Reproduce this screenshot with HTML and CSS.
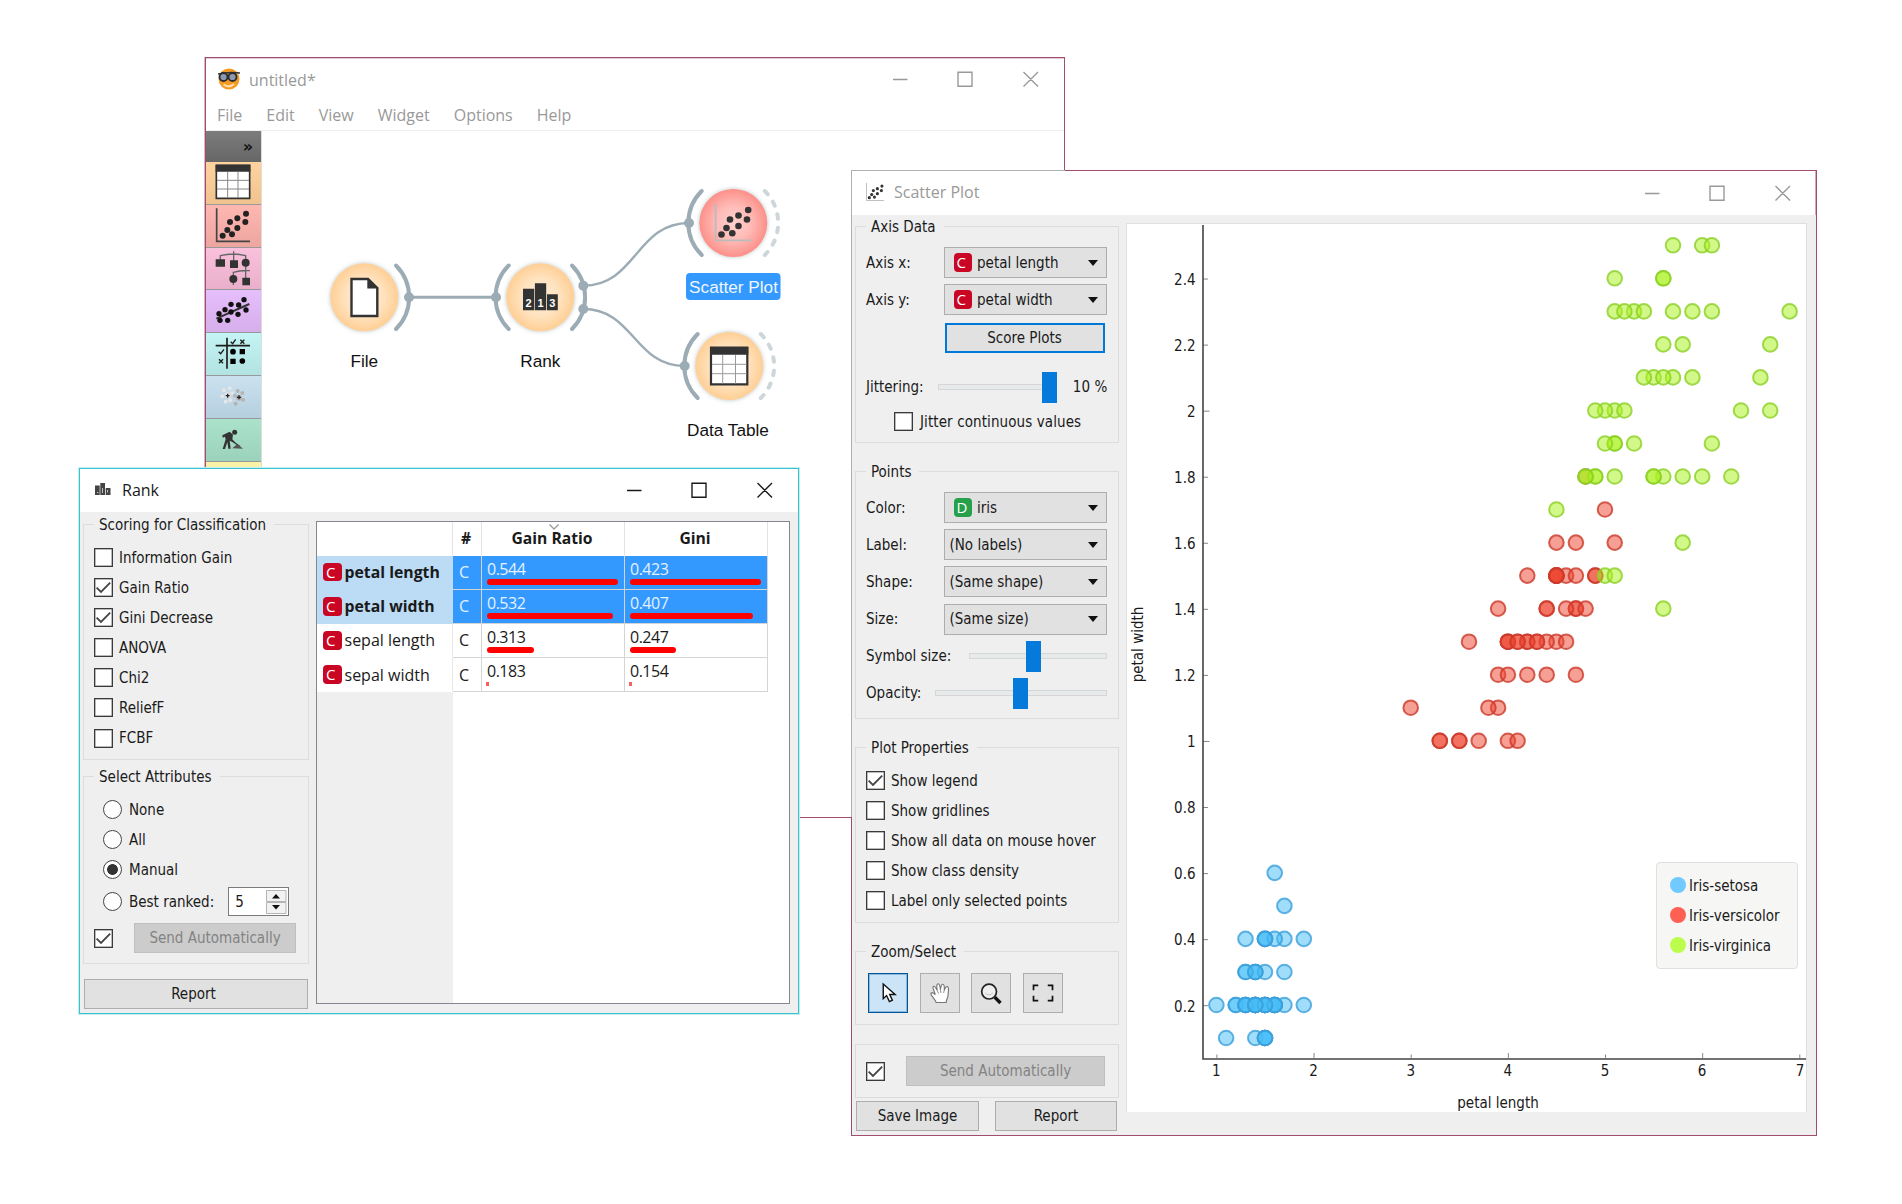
FILE: index.html
```html
<!DOCTYPE html>
<html lang="en">
<head>
<meta charset="utf-8">
<title>Orange workflow: Rank and Scatter Plot</title>
<link rel="stylesheet" href="styles.css">
</head>
<body>
<svg class="defs" aria-hidden="true">
  <defs>
    <symbol id="controls" viewBox="0 0 146 16"><path d="M0 8.5H14.5M65 1.2H79V15.2H65ZM130.5 1L145 15.5M145 1L130.5 15.5" fill="none" stroke="currentColor" stroke-width="1.4"/></symbol>
    <symbol id="tick" viewBox="0 0 19 19"><path d="M2.6 9.6L7 14L16.2 4.6" fill="none" stroke="#444" stroke-width="1.8"/></symbol>
    <symbol id="scatter" viewBox="0 0 38 38"><path d="M1 0V37H38" fill="none" stroke="var(--axis)" stroke-width="2"/><g fill="#333"><circle cx="7" cy="31" r="3.3"/><circle cx="12" cy="24.500" r="3.300"/><circle cx="17.800" cy="29.800" r="3.300"/><circle cx="15.500" cy="16" r="3.300"/><circle cx="24" cy="12" r="3.300"/><circle cx="24" cy="22.500" r="3.300"/><circle cx="33.700" cy="6.500" r="3.300"/><circle cx="32.500" cy="16" r="3.300"/></g></symbol>
    <radialGradient id="orange"><stop offset="0" stop-color="#ffedd5"/><stop offset=".55" stop-color="#ffe3c0"/><stop offset="1" stop-color="#ffcf95"/></radialGradient>
    <radialGradient id="red"><stop offset="0" stop-color="#ffd0cd"/><stop offset=".5" stop-color="#ffbcb8"/><stop offset="1" stop-color="#fc9089"/></radialGradient>
    <filter id="shade" x="-20%" y="-20%" width="140%" height="140%"><feDropShadow dx="0" dy="0" stdDeviation="2" flood-color="#788" flood-opacity=".5"/></filter>
  </defs>
</svg>

<main class="desktop">
  <section class="window main-window">
    <header class="titlebar">
      <svg class="app-icon" viewBox="0 0 22 22"><circle cx="11" cy="11" r="10.500" fill="#f59a23"/><path d="M5.500 16.500Q11 20.500 16 16" fill="none" stroke="#ffe0b0" stroke-width="2"/><path d="M0 6Q11 3.500 22 5" stroke="#333" stroke-width="1.500" fill="none"/><g fill="#8d99ad" stroke="#2c2c34" stroke-width="1.800"><circle cx="5.500" cy="9" r="4"/><circle cx="14.500" cy="9" r="4"/></g></svg>
      <h1>untitled*</h1>
      <svg class="controls"><use href="#controls"/></svg>
    </header>
    <nav class="menu"><a>File</a><a>Edit</a><a>View</a><a>Widget</a><a>Options</a><a>Help</a></nav>
    <div class="work">
      <aside class="toolbox">
        <div class="tb-head">»</div>
        <div class="tb data"><svg viewBox="33 335 162 126"><path d="M64 345H164V444H64Z" fill="#fff" stroke="#333" stroke-width="5"/><path d="M62 343H166V364H62Z" fill="#333"/><path d="M98 364V443M129 364V443M66 390H162M66 416H162" stroke="#888" stroke-width="3"/></svg></div>
        <div class="tb visualize"><svg viewBox="33 463 162 126"><path d="M65 473V572H165" fill="none" stroke="#444" stroke-width="5"/><g fill="#222"><circle cx="83" cy="555" r="9"/><circle cx="97" cy="538" r="9"/><circle cx="111" cy="551" r="9"/><circle cx="105" cy="514" r="9"/><circle cx="127" cy="503" r="9"/><circle cx="127" cy="532" r="9"/><circle cx="153" cy="489" r="9"/><circle cx="151" cy="514" r="9"/></g></svg></div>
        <div class="tb model"><svg viewBox="33 591 162 126"><path d="M76 626V614Q116 604 152 614V690M116 601V630M115 702V664Q138 657 165 659" fill="none" stroke="#666" stroke-width="4"/><path d="M62 625H90V647H62ZM105 628H129V651H105ZM142 680H165V703H142Z" fill="#333"/><circle cx="152" cy="635" r="12" fill="#333"/><circle cx="115" cy="684" r="12" fill="#333"/></svg></div>
        <div class="tb regression"><svg viewBox="33 720 162 126"><path d="M64 806L163 762" stroke="#333" stroke-width="6"/><g fill="#111"><circle cx="147" cy="749" r="8"/><circle cx="108" cy="763" r="8"/><circle cx="153" cy="780" r="8"/><circle cx="90" cy="779" r="8"/><circle cx="131" cy="765" r="8"/><circle cx="72" cy="791" r="8"/><circle cx="108" cy="786" r="8"/><circle cx="129" cy="793" r="8"/><circle cx="75" cy="811" r="8"/><circle cx="98" cy="811" r="8"/></g></svg></div>
        <div class="tb evaluate"><svg viewBox="33 848 162 126"><path d="M62 886H165M96 862V955" stroke="#1c1c1c" stroke-width="5"/><path d="M107 874L113 880L122 867M71 904L77 910L87 897M136 868L148 880M148 868L136 880M72 927L84 939M84 927L72 939" fill="none" stroke="#1c1c1c" stroke-width="4"/><path d="M134 896H150V912H134ZM106 925H122V941H106Z"/><circle cx="114" cy="904" r="8.500"/><circle cx="142" cy="932" r="8.500"/></svg></div>
        <div class="tb unsupervised"><svg viewBox="33 977 162 126"><g fill="#e6e6e6"><circle cx="87" cy="1020" r="6"/><circle cx="104" cy="1014" r="6"/><circle cx="82" cy="1038" r="6"/><circle cx="92" cy="1054" r="6"/><circle cx="106" cy="1050" r="6"/><circle cx="98" cy="1035" r="9"/><circle cx="112" cy="1028" r="5"/></g><g fill="#b4b4b4"><circle cx="128" cy="1022" r="6"/><circle cx="142" cy="1028" r="6"/><circle cx="120" cy="1036" r="6"/><circle cx="144" cy="1048" r="6"/><circle cx="122" cy="1060" r="6"/><circle cx="132" cy="1042" r="9"/></g><path d="M92 1036H104M98 1030V1042M126 1041H138M132 1035V1047" stroke="#222" stroke-width="4"/></svg></div>
        <div class="tb educational"><svg viewBox="33 1105 162 126"><circle cx="119" cy="1145" r="7.500" fill="#333"/><path d="M82 1154L104 1143L114 1152L112 1166L122 1176L136 1186L134 1189L112 1174L104 1170L107 1194L100 1194L97 1174L90 1195L83 1195L92 1166L90 1158L83 1161Z" fill="#333"/><path d="M112 1193L124 1182L132 1184L144 1194Z" fill="#555"/></svg></div>
        <div class="tb prototypes"></div>
      </aside>
      <svg class="canvas" viewBox="262 131 802 400" width="802" height="400">
        <g class="links"><path d="M409 297.300H496" stroke-width="3"/><path d="M583.300 285.700C636 285.700 636 223 689 223"/><path d="M583.300 309C634 309 634 366 684.700 366"/></g>
        <g class="nodes" filter="url(#shade)"><circle cx="364.300" cy="297.300" r="34" fill="url(#orange)"/><circle cx="540.300" cy="297.300" r="34" fill="url(#orange)"/><circle cx="733.300" cy="223" r="34" fill="url(#red)"/><circle cx="729.300" cy="366" r="34" fill="url(#orange)"/></g>
        <g class="anchors">
          <path d="M396 265.500A45 45 0 0 1 396 329"/><path d="M508.700 265.500A45 45 0 0 0 508.700 329"/><path d="M572 265.500A45 45 0 0 1 572 329"/>
          <path d="M701.700 191A45 45 0 0 0 701.700 255"/><path d="M697.700 334A45 45 0 0 0 697.700 398"/>
          <g class="open"><path d="M764.800 191A45 45 0 0 1 764.800 255"/><path d="M760.800 334A45 45 0 0 1 760.800 398"/></g>
        </g>
        <g fill="#9cacb5"><circle cx="409" cy="297.300" r="5"/><circle cx="496" cy="297.300" r="5"/><circle cx="583.300" cy="285.700" r="5"/><circle cx="583.300" cy="309" r="5"/><circle cx="689" cy="223" r="5"/><circle cx="684.700" cy="366" r="5"/></g>
        <path d="M351.500 279H368L377.300 288V316H351.500Z" fill="#fff" stroke="#333" stroke-width="2.400"/><path d="M367.300 278L378.500 288.500H367.300Z" fill="#333"/>
        <path d="M523 288.700H534.200V310.300H523ZM534.900 283.300H546.200V310.300H534.900ZM547 294.300H557.800V310.300H547Z" fill="#333"/>
        <g class="ranks"><text x="528.600" y="307">2</text><text x="540.500" y="307">1</text><text x="552.400" y="307">3</text></g>
        <svg class="gray-axis" x="714.500" y="203.500" width="38" height="38"><use href="#scatter"/></svg>
        <path d="M711 348H747.300V384.300H711Z" fill="#fff" stroke="#333" stroke-width="2.200"/><path d="M710 346.500H748.300V354.700H710Z" fill="#333"/><path d="M722.700 355V383.500M735.500 355V383.500M712 364.300H746.500M712 373.700H746.500" stroke="#999"/>
        <rect x="686" y="273" width="94.500" height="27" rx="4" fill="#39f"/>
        <g class="labels"><text x="364.300" y="367.300">File</text><text x="540.300" y="367.300">Rank</text><text class="picked" x="733.500" y="292.800">Scatter Plot</text><text x="728" y="435.700">Data Table</text></g>
      </svg>
    </div>
  </section>

  <section class="window scatter-window">
    <header class="titlebar">
      <svg class="app-icon gray-axis" viewBox="0 0 38 38"><use href="#scatter"/></svg>
      <h1>Scatter Plot</h1>
      <svg class="controls"><use href="#controls"/></svg>
    </header>
    <div class="body">
      <aside class="panel">
        <fieldset class="axis-data"><legend>Axis Data</legend>
          <div class="rows">
            <div class="row"><label>Axis x:</label><div class="combo"><i class="var c">C</i>petal length</div></div>
            <div class="row"><label>Axis y:</label><div class="combo"><i class="var c">C</i>petal width</div></div>
            <div class="row end"><button class="btn primary">Score Plots</button></div>
          </div>
          <div class="row jitter"><label>Jittering:</label><div class="slider s1"><b></b></div><span>10 %</span></div>
          <div class="check indent"><i class="box"></i>Jitter continuous values</div>
        </fieldset>
        <fieldset class="points"><legend>Points</legend>
          <div class="rows">
            <div class="row"><label>Color:</label><div class="combo"><i class="var d">D</i>iris</div></div>
            <div class="row"><label>Label:</label><div class="combo text">(No labels)</div></div>
            <div class="row"><label>Shape:</label><div class="combo text">(Same shape)</div></div>
            <div class="row"><label>Size:</label><div class="combo text">(Same size)</div></div>
            <div class="row"><label>Symbol size:</label><div class="slider s2"><b></b></div></div>
            <div class="row"><label>Opacity:</label><div class="slider s3"><b></b></div></div>
          </div>
        </fieldset>
        <fieldset class="properties"><legend>Plot Properties</legend>
          <div class="checks">
            <div class="check"><i class="box"><svg><use href="#tick"/></svg></i>Show legend</div>
            <div class="check"><i class="box"></i>Show gridlines</div>
            <div class="check"><i class="box"></i>Show all data on mouse hover</div>
            <div class="check"><i class="box"></i>Show class density</div>
            <div class="check"><i class="box"></i>Label only selected points</div>
          </div>
        </fieldset>
        <fieldset class="zoom"><legend>Zoom/Select</legend>
          <div class="tools">
            <button class="tool on"><svg viewBox="0 0 40 40"><path d="M15 10.500V26L18.500 22.700L21.500 29L24.600 27.600L21.800 21.500H27.500Z" fill="#fff" stroke="#111" stroke-width="1.500"/></svg></button>
            <button class="tool"><svg viewBox="0 0 40 40"><path d="M16 30C14.500 26 10 22.500 10.500 20.300C11.500 18.500 14 20.500 15 21.800C14.500 18.500 11.500 14.500 13 13C15 12 16 15.500 17 17C16.500 14 16 10.500 18 10.300C20 10.300 20 14 20.500 16.500C20.800 14 21 10.600 23 10.800C25 11 24.600 14.500 24.500 17C25.500 15 26.500 12.500 28 13.300C30 14.500 28.500 18 28.500 22C28.500 25 26.500 27 26.500 30Z" fill="#fff" stroke="#777" stroke-width="1.200"/><path d="M17 17L18.500 20.500M20.500 16.500L21 20M24.500 17L23.800 20" stroke="#888" stroke-width="1"/></svg></button>
            <button class="tool"><svg viewBox="0 0 40 40"><circle cx="18" cy="18.500" r="7.800" fill="#eee" stroke="#222" stroke-width="1.800"/><path d="M14 20Q17 24 22 20" fill="none" stroke="#bbb"/><path d="M24 24.500L30 30.500" stroke="#111" stroke-width="3.500"/></svg></button>
            <button class="tool"><svg viewBox="0 0 40 40"><path d="M10 17V12H15M25 12H30V17M30 23V28H25M15 28H10V23" fill="none" stroke="#111" stroke-width="1.800"/></svg></button>
          </div>
        </fieldset>
        <div class="group auto"><i class="box"><svg><use href="#tick"/></svg></i><button class="btn off">Send Automatically</button></div>
        <div class="actions"><button class="btn">Save Image</button><button class="btn">Report</button></div>
      </aside>
      <div class="plot">
        <svg id="plot" viewBox="1127 225 679 888" width="679" height="888"></svg>
        <ul class="legend"><li><i class="dot setosa"></i>Iris-setosa</li><li><i class="dot versicolor"></i>Iris-versicolor</li><li><i class="dot virginica"></i>Iris-virginica</li></ul>
      </div>
    </div>
  </section>

  <section class="window rank-window">
    <header class="titlebar">
      <svg class="rank-icon" viewBox="0 0 16 13"><path d="M0 2.500H4.700V12H0ZM5.300 0H10V12H5.300ZM10.700 5H15.500V12H10.700Z" fill="#444"/><path d="M2 9.500H3.500M7.500 5V10M12.500 7V9.500" stroke="#bbb"/></svg>
      <h1>Rank</h1>
      <svg class="controls"><use href="#controls"/></svg>
    </header>
    <div class="body">
      <aside class="panel">
        <fieldset class="scoring"><legend>Scoring for Classification</legend>
          <div class="checks">
            <div class="check"><i class="box"></i>Information Gain</div>
            <div class="check"><i class="box"><svg><use href="#tick"/></svg></i>Gain Ratio</div>
            <div class="check"><i class="box"><svg><use href="#tick"/></svg></i>Gini Decrease</div>
            <div class="check"><i class="box"></i>ANOVA</div>
            <div class="check"><i class="box"></i>Chi2</div>
            <div class="check"><i class="box"></i>ReliefF</div>
            <div class="check"><i class="box"></i>FCBF</div>
          </div>
        </fieldset>
        <fieldset class="select"><legend>Select Attributes</legend>
          <div class="checks radios">
            <div class="check"><i class="radio"></i>None</div>
            <div class="check"><i class="radio"></i>All</div>
            <div class="check"><i class="radio on"></i>Manual</div>
          </div>
          <div class="best"><i class="radio"></i><span>Best ranked:</span>
            <div class="spin"><span>5</span><svg viewBox="0 0 21 24"><path d="M.5.500H20V11.500H.5ZM.5 12.500H20V23.500H.5Z" fill="#f2f2f2" stroke="#b5b5b5"/><path d="M6 8.500L10 4L14 8.500ZM6 15L10 19.500L14 15Z" fill="#111"/></svg></div>
          </div>
          <div class="auto"><i class="box"><svg><use href="#tick"/></svg></i><button class="btn off">Send Automatically</button></div>
        </fieldset>
        <button class="btn report">Report</button>
      </aside>
      <div class="table-frame">
        <table>
          <thead><tr><th class="name"></th><th>#</th><th class="sorted">Gain Ratio<svg viewBox="0 0 10 6"><path d="M.5.500L5 5L9.500.500" fill="none" stroke="#999" stroke-width="1.300"/></svg></th><th>Gini</th></tr></thead>
          <tbody>
            <tr class="sel"><th><span><i class="var c">C</i>petal length</span></th><td>C</td><td class="v">0.544<b style="width:131px"></b></td><td class="v">0.423<b style="width:131px"></b></td></tr>
            <tr class="sel"><th><span><i class="var c">C</i>petal width</span></th><td>C</td><td class="v">0.532<b style="width:125.500px"></b></td><td class="v">0.407<b style="width:122.500px"></b></td></tr>
            <tr><th><span><i class="var c">C</i>sepal length</span></th><td>C</td><td class="v">0.313<b style="width:47px"></b></td><td class="v">0.247<b style="width:45.500px"></b></td></tr>
            <tr><th><span><i class="var c">C</i>sepal width</span></th><td>C</td><td class="v">0.183<b class="min" style="width:3px"></b></td><td class="v">0.154<b class="min" style="width:3px"></b></td></tr>
          </tbody>
        </table>
        <div class="rest"></div>
      </div>
    </div>
  </section>
</main>
<script src="plot.js"></script>
</body>
</html>
```
FILE: styles.css
```css
:root {
  --form: "DejaVu Sans Condensed", "DejaVu Sans", sans-serif;
  --ui: "Open Sans", "Noto Sans", sans-serif;
}
* { box-sizing: border-box; }
body { margin: 0; background: #fff; font: 15px/20px var(--form); color: #1a1a1a; }
.defs { position: absolute; width: 0; height: 0; }
.desktop { position: relative; width: 1902px; height: 1204px; overflow: hidden; }
i { font-style: normal; }
button { font: inherit; color: inherit; padding: 0; }

/* windows */
.window { position: absolute; border: 1px solid #a04d70; background: #fff; color: #1a1a1a; display: flex; flex-direction: column; }
.main-window { left: 205px; top: 57px; width: 860px; height: 761px; box-shadow: -1px 0 #d9b5c4, inset 0 1px #e3cbd5; }
.scatter-window { left: 851px; top: 170px; width: 966px; height: 966px; box-shadow: inset 0 -1px #d3a9bb, inset -1px 0 #d3a9bb; }
.rank-window { left: 79px; top: 468px; width: 720px; height: 546px; border-color: #35c4cf; box-shadow: 0 0 0 1px #c4eef1; }
.scatter-window::before, .scatter-window::after { content: ""; position: absolute; left: -1px; top: -1px; background: #b0b0b0; }
.scatter-window::before { width: 214px; height: 1px; }
.scatter-window::after { width: 1px; height: 647px; }

.titlebar { display: flex; align-items: center; flex: none; height: 44px; padding: 0 25px 0 14px; color: #999; }
.titlebar h1 { margin: -2px 0 0; font: 400 16px/22px var(--ui); flex: 1; }
.controls { width: 146px; height: 16px; margin-top: -1px; color: #999; }
.app-icon { width: 18px; height: 18px; margin-right: 10px; margin-top: -2px; }
.gray-axis { --axis: #bbb; }
.main-window .titlebar { height: 45px; padding-left: 11px; }
.main-window .app-icon { width: 22px; height: 22px; margin: -4px 9px 0 1px; }
.main-window .controls { margin-top: -4px; }
.rank-window .titlebar { height: 43px; }
.rank-window .titlebar, .rank-window .titlebar .controls { color: #1a1a1a; }
.rank-icon { width: 16px; height: 13px; margin: -2px 11px 0 1px; }

/* main window */
.menu { display: flex; gap: 24px; height: 28px; padding: 1px 0 0 11px; font: 16px/22px var(--ui); color: #999; border-bottom: 1px solid #eee; }
.work { display: flex; flex: 1; min-height: 0; overflow: hidden; }
.toolbox { width: 56px; flex: none; border-right: 1px solid #ddd; }
.tb-head { height: 31px; background: linear-gradient(#7c7c7c, #666); color: #111; font: bold 16px/31px "DejaVu Sans", sans-serif; text-align: right; padding-right: 8px; }
.tb { height: 42.830px; border-bottom: 1px solid #999; }
.tb svg { display: block; width: 54px; height: 42px; }
.data { background: linear-gradient(#ffd39f, #f0c38e); }
.visualize { background: linear-gradient(#ffb7b1, #eda5a0); }
.model { background: linear-gradient(#fac1dc, #eab0cb); }
.regression { background: linear-gradient(#e5befc, #d5aeea); }
.evaluate { background: linear-gradient(#c4f4f3, #b1e3e2); }
.unsupervised { background: linear-gradient(#cbe1f0, #b5cfdf); }
.educational { background: linear-gradient(#abe2cc, #9bd2bb); }
.prototypes { background: #f9f2a7; }
.canvas { flex: none; display: block; }
.links { fill: none; stroke: #9cacb5; stroke-width: 2.400; }
.anchors { fill: none; stroke: #9cacb5; stroke-width: 4; stroke-linecap: round; }
.open { stroke: #cdd6da; stroke-dasharray: 4.500 8.900; }
.labels { font: 17.200px "Liberation Sans", Arial, sans-serif; text-anchor: middle; fill: #111; }
.picked { fill: #eef6ff; }
.ranks { font: bold 11px "Liberation Sans", Arial, sans-serif; text-anchor: middle; fill: #fff; }

/* form parts */
.body { display: flex; flex: 1; background: #efefef; min-height: 0; }
.panel { display: flex; flex-direction: column; flex: none; }
fieldset, .group { margin: 0; padding: 0 11.500px 0 10px; border: 1px solid #dcdcdc; min-width: 0; }
legend { padding: 0 8px 0 5px; height: 20px; line-height: 22px; }
.rows { display: grid; gap: 6.200px; padding-top: 11px; }
.row { display: flex; align-items: center; justify-content: space-between; height: 31px; }
.row.end { justify-content: flex-end; padding-right: 2px; margin-top: 1px; }
.combo { width: 163px; height: 31px; padding: 0 8px 0 9px; display: flex; align-items: center; gap: 5px; background: #e1e1e1; border: 1px solid #adadad; }
.combo.text { padding-left: 5px; }
.combo::after { content: ""; margin-left: auto; border: 5px solid transparent; border-top: 6px solid #111; border-bottom: 0; }
.var { display: inline-block; width: 18.500px; height: 18.500px; border-radius: 4px; color: #fff; font: 15px/19px var(--ui); text-align: left; padding-left: 3px; flex: none; }
.c { background: #ca0625; }
.d { background: #26a04b; }
.btn { height: 30px; background: #e1e1e1; border: 1px solid #adadad; }
.btn.primary { width: 160px; border: 2px solid #0078d7; }
.btn.off { background: #ccc; border-color: #bfbfbf; color: #838383; }
.slider { height: 6px; border: 1px solid #d6d6d6; background: #e7eaea; position: relative; }
.slider b { position: absolute; top: -13px; width: 14.500px; height: 31px; background: #057adb; }
.s1 { width: 119px; margin-left: -1px; }
.s1 b { left: 103px; }
.s2 { width: 138px; }
.s2 b { left: 56.500px; }
.s3 { width: 172px; }
.s3 b { left: 77.500px; }
.jitter { margin-top: 18px; }
.jitter span { margin-right: -1px; letter-spacing: .1px; }
.checks { display: grid; gap: 11.100px; padding-top: 14px; }
.check { display: flex; align-items: center; gap: 6px; height: 19px; white-space: nowrap; }
.check.indent { margin: 10px 0 0 28px; gap: 7px; letter-spacing: .1px; }
.box { width: 19px; height: 19px; border: 1.500px solid #3a3a3a; box-shadow: inset 0 0 0 .5px #777; background: #fff; flex: none; }
.box svg { display: block; width: 19px; height: 19px; margin: -1px; }
.radio { width: 19px; height: 19px; border: 1.500px solid #444; border-radius: 50%; background: #fff; flex: none; }
.radio.on { background: radial-gradient(circle, #333 5px, #fff 5.800px); }
.auto { display: flex; align-items: center; }

/* scatter plot window */
.scatter-window .panel { width: 264px; margin: 1px 0 0 3px; }
.axis-data { height: 227px; }
.points { height: 258px; margin-top: 18px; }
.properties { height: 186px; margin-top: 18px; }
.zoom { height: 84px; margin-top: 18px; }
.tools { display: flex; gap: 11.300px; padding: 12px 0 0 2px; }
.tool { width: 40.300px; height: 40.300px; background: #e1e1e1; border: 1px solid #adadad; }
.tool svg { display: block; width: 38px; height: 38px; }
.tool.on { background: #cce4f7; border: 1px solid #005499; box-shadow: inset 0 0 0 1px #8fb9dc; }
.group.auto { height: 54px; margin-top: 19px; justify-content: space-between; padding-right: 13px; }
.group .btn { width: 199px; }
.actions { display: flex; gap: 16px; margin: 3px 0 0 1px; }
.actions .btn { width: 123px; }
.actions .btn + .btn { width: 122px; }
.plot { position: relative; width: 681px; height: 889px; margin: 8px 0 0 7px; background: #fff; border: 1px solid #e0e0e0; border-bottom: 0; }
.plot > svg { display: block; }
.plot .axis { stroke: #444; stroke-width: 1.600; fill: none; }
.plot .mark { stroke: #888; stroke-width: 1; }
.plot text { font: 15px var(--form); fill: #1a1a1a; }
.plot circle { stroke-width: 2; fill-opacity: .52; stroke-opacity: .8; }
.plot .setosa { fill: #46bef8; stroke: #3b9fdb; }
.plot .versicolor { fill: #ee4632; stroke: #cc3a2a; }
.plot .virginica { fill: #aaf11e; stroke: #8bcf24; }
.legend { position: absolute; left: 529px; top: 638px; width: 142px; height: 107px; margin: 0; padding: 13px 0 0 13px; list-style: none; background: #f6f6f5; border: 1.500px solid #e0e0e0; border-radius: 4px; display: grid; align-content: start; gap: 10px; }
.legend li { display: flex; align-items: center; gap: 3px; }
.dot { width: 16px; height: 16px; border-radius: 50%; margin-top: -3px; }
.dot.setosa { background: #70caff; }
.dot.versicolor { background: #ff6054; }
.dot.virginica { background: #bcfc4c; }

/* rank window */
.rank-window .panel { width: 226px; margin: 2px 0 0 3px; }
.scoring { height: 246px; }
.select { height: 198px; margin-top: 6px; }
.radios { gap: 11px; }
.radios, .best { padding-left: 9px; }
.radios .check { gap: 7px; }
.best { display: flex; align-items: center; height: 29px; margin-top: 8px; }
.best > span { margin-left: 7px; white-space: nowrap; }
.spin { display: flex; align-items: center; justify-content: space-between; width: 61px; height: 29px; margin-left: 14px; padding: 0 1px 0 6px; border: 1px solid #7a7a7a; background: #fff; }
.spin svg { width: 21px; height: 24px; }
.select .auto { margin-top: 7px; gap: 21px; }
.select .btn { width: 162px; }
.report { width: 224px; margin: 15px 0 0 1px; padding-right: 5px; }
.table-frame { width: 474px; height: 483px; margin: 9px 0 0 7px; border: 1px solid #828790; background: #fff; display: flex; flex-direction: column; }
table { border-collapse: separate; border-spacing: 0; table-layout: fixed; width: 451px; font: 16px/20px var(--ui); }
th, td { padding: 0; text-align: left; font-weight: 400; height: 34.200px; border-right: 1px solid #d4d4d4; border-bottom: 1px solid #d4d4d4; }
thead th { position: relative; height: 33.500px; text-align: center; font-weight: 700; font-size: 15.700px; border-color: #e3e3e3; border-bottom-color: transparent; padding: 0 2px 0 0; }
thead th:nth-child(1) { width: 136px; }
thead th:nth-child(2) { width: 29px; }
thead th:nth-child(3), thead th:nth-child(4) { width: 143px; }
.sorted svg { position: absolute; left: 67px; top: 2px; width: 10px; height: 6px; }
tbody th { border-bottom-color: transparent; border-right-color: #e8e8e8; }
tbody th span { display: flex; align-items: center; gap: 3px; padding-left: 6px; height: 33px; }
.sel th { background: #bbdcf4; font-weight: 700; font-size: 15.800px; border-color: #bbdcf4; }
.sel td { background: #39f; color: #e4f1ff; }
td:nth-child(2) { padding-left: 6px; }
.v { padding: 3px 0 0 5px; line-height: 20px; letter-spacing: -.5px; vertical-align: top; }
.v b { display: block; height: 6px; border-radius: 3px; background: #f00; margin-top: 0; }
.v .min { height: 4px; background: #fb6058; border-radius: 0; margin: 1px 0 0 -1px; }
.rest { flex: 1; width: 136px; background: #efefef; }
```
FILE: plot.js
```js
// Iris petal measurements as "length width" pairs, one list per class.
const iris = {
  setosa: "1.4 .2,1.4 .2,1.3 .2,1.5 .2,1.4 .2,1.7 .4,1.4 .3,1.5 .2,1.4 .2,1.5 .1,1.5 .2,1.6 .2,1.4 .1,1.1 .1,1.2 .2,1.5 .4,1.3 .4,1.4 .3,1.7 .3,1.5 .3,1.7 .2,1.5 .4,1.0 .2,1.7 .5,1.9 .2,1.6 .2,1.6 .4,1.5 .2,1.4 .2,1.6 .2,1.6 .2,1.5 .4,1.5 .1,1.4 .2,1.5 .1,1.2 .2,1.3 .2,1.5 .1,1.3 .2,1.5 .2,1.3 .3,1.3 .3,1.3 .2,1.6 .6,1.9 .4,1.4 .3,1.6 .2,1.4 .2,1.5 .2,1.4 .2",
  versicolor: "4.7 1.4,4.5 1.5,4.9 1.5,4.0 1.3,4.6 1.5,4.5 1.3,4.7 1.6,3.3 1.0,4.6 1.3,3.9 1.4,3.5 1.0,4.2 1.5,4.0 1.0,4.7 1.4,3.6 1.3,4.4 1.4,4.5 1.5,4.1 1.0,4.5 1.5,3.9 1.1,4.8 1.8,4.0 1.3,4.9 1.5,4.7 1.2,4.3 1.3,4.4 1.4,4.8 1.4,5.0 1.7,4.5 1.5,3.5 1.0,3.8 1.1,3.7 1.0,3.9 1.2,5.1 1.6,4.5 1.5,4.5 1.6,4.7 1.5,4.4 1.3,4.1 1.3,4.0 1.3,4.4 1.2,4.6 1.4,4.0 1.2,3.3 1.0,4.2 1.3,4.2 1.2,4.2 1.3,4.3 1.3,3.0 1.1,4.1 1.3",
  virginica: "6.0 2.5,5.1 1.9,5.9 2.1,5.6 1.8,5.8 2.2,6.6 2.1,4.5 1.7,6.3 1.8,5.8 1.8,6.1 2.5,5.1 2.0,5.3 1.9,5.5 2.1,5.0 2.0,5.1 2.4,5.3 2.3,5.5 1.8,6.7 2.2,6.9 2.3,5.0 1.5,5.7 2.3,4.9 2.0,6.7 2.0,4.9 1.8,5.7 2.1,6.0 1.8,4.8 1.8,4.9 1.8,5.6 2.1,5.8 1.6,6.1 1.9,6.4 2.0,5.6 2.2,5.1 1.5,5.6 1.4,6.1 2.3,5.6 2.4,5.5 1.8,4.8 1.8,5.4 2.1,5.6 2.4,5.1 2.3,5.1 1.9,5.9 2.3,5.7 2.5,5.2 2.3,5.0 1.9,5.2 2.0,5.4 2.3,5.1 1.8"
};

const px = v => 1216.4 + 97.15 * (v - 1);
const py = v => 1006 - 330.3 * (v - 0.2);
let out = "";

for (let i = 1; i <= 12; i++) {
  const v = +(i * 0.2).toFixed(1), y = py(v);
  out += `<path class="mark" d="M1203 ${y + 0.7}h${v % 1 ? 5 : 6.5}"/><text x="1195.500" y="${y + 6.5}" text-anchor="end">${v}</text>`;
}
for (let v = 1; v <= 7; v++) {
  const x = px(v);
  out += `<path class="mark" d="M${x + 0.5} 1059v${v % 2 ? -3.5 : -5}"/><text x="${v === 7 ? 1800 : x}" y="1076.500" text-anchor="middle">${v}</text>`;
}
out += `<path class="axis" d="M1203 226V1060H1806"/>`;
out += `<text x="1498" y="1109" text-anchor="middle">petal length</text>`;
out += `<text transform="translate(1143 645.500) rotate(-90)" text-anchor="middle">petal width</text>`;
for (const [name, list] of Object.entries(iris)) {
  for (const pair of list.split(",")) {
    const [x, y] = pair.split(" ").map(Number);
    out += `<circle class="${name}" cx="${px(x).toFixed(1)}" cy="${py(y).toFixed(1)}" r="7.300"/>`;
  }
}
document.getElementById("plot").innerHTML = out;
```
